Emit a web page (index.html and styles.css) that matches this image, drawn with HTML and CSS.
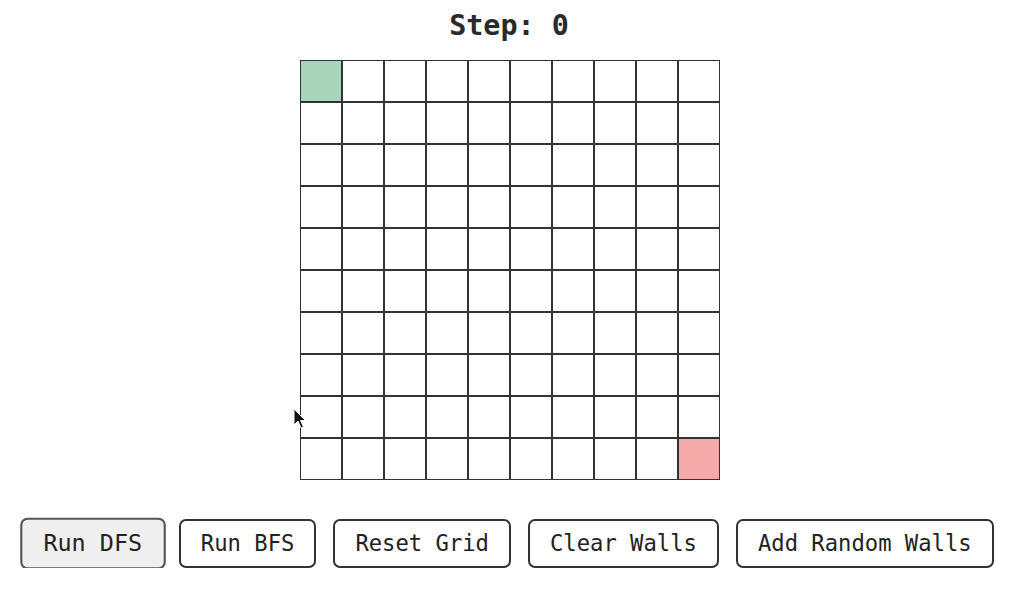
FILE: index.html
```html
<!doctype html>
<html>
<head>
<meta charset="utf-8">
<title>Grid Search</title>
<link rel="stylesheet" href="styles.css">
</head>
<body>
<div class="wrapper">
	<h1 class="step">Step: 0</h1>
	<div class="grid" id="grid"></div>
	<div class="controls">
		<button class="btn hover">Run DFS</button>
		<button class="btn">Run BFS</button>
		<button class="btn">Reset Grid</button>
		<button class="btn">Clear Walls</button>
		<button class="btn">Add Random Walls</button>
	</div>
</div>
<svg class="pointer" width="14" height="22" viewBox="0 0 14 22">
	<path d="M1 1 L1 17 L5 13 L8 20 L10.5 19 L7.5 12.5 L12.5 12.5 Z" fill="#111" stroke="#fff" stroke-width="1"/>
</svg>
<script>
var grid = document.getElementById("grid");
for (var i = 0; i < 100; i++) {
	var c = document.createElement("div");
	c.className = "cell";
	if (i == 0) c.className += " start";
	if (i == 99) c.className += " end";
	grid.appendChild(c);
}
</script>
</body>
</html>
```
FILE: styles.css
```css
body{
	margin:0;
	background:#fff;
	color:#2a2a2a;
	font-family:"DejaVu Sans Mono", "Liberation Mono", monospace;
	}
.wrapper{
	display:flex;
	flex-direction:column;
	align-items:center;
	padding-top:9px;
	}
.step{
	font-size:28.4px;
	font-weight:bold;
	margin:0 0 18px 0;
	line-height:33px;
	}
.grid{
	display:grid;
	grid-template-columns:repeat(10, 42px);
	grid-template-rows:repeat(10, 42px);
	margin-left:2px;
	}
.cell{
	border:1px solid #333;
	background:#fff;
	}
.cell.start{
	background:#a8d5ba;
	}
.cell.end{
	background:#f5a9a9;
	}
.controls{
	display:flex;
	gap:17px;
	margin-top:39px;
	}
.btn{
	font-family:"DejaVu Sans Mono", "Liberation Mono", monospace;
	font-size:22.2px;
	color:#222;
	background:#fff;
	border:2px solid #333;
	border-radius:7px;
	padding:10px 20px;
	line-height:25px;
	cursor:pointer;
	}
.btn.hover{
	background:#efefef;
	border-color:#555;
	transform:scale(1.055);
	}
.pointer{
	position:absolute;
	left:293px;
	top:408px;
	}
```
